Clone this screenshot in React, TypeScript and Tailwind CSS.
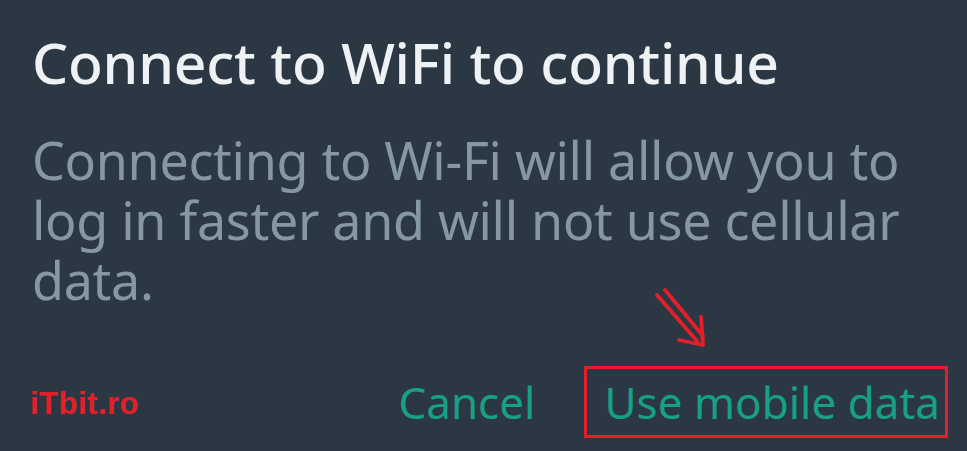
import { } from 'react'

function Arrow() {
  return (
    <svg
      className="absolute left-[652px] top-[288px]"
      width="62"
      height="64"
      viewBox="0 0 62 64"
      fill="none"
      stroke="#e3202a"
      strokeWidth="3.8"
      strokeLinecap="round"
      strokeLinejoin="round"
    >
      <path d="M5 7 L45 53" />
      <path d="M13 2 L51 48" />
      <path d="M27 52 L51 57 L49 29" />
    </svg>
  )
}

export default function App() {
  return (
    <div className="relative h-[451px] w-[967px] overflow-hidden bg-[#2b3844] font-['Noto_Sans',sans-serif]">
      <div className="flex flex-col pl-[32px] pt-[24px]">
        <h1 className="text-[57px] font-medium leading-[76px] tracking-[-0.2px] text-[#eef2f5]">
          Connect to WiFi to continue
        </h1>
        <p className="mt-[30px] w-[910px] text-[52px] leading-[60px] tracking-[-0.3px] text-[#8697a4]">
          Connecting to Wi-Fi will allow you to log in faster and will not use cellular data.
        </p>
      </div>

      <div className="mt-[56px] flex items-center justify-between pl-[30px] pr-[19px]">
        <span className="mt-[4px] font-['Liberation_Sans',sans-serif] text-[31px] font-bold tracking-[0.5px] text-[#e3202a]">
          iTbit.ro
        </span>
        <div className="flex items-center gap-[49px]">
          <button className="text-[44px] leading-[56px] text-[#17a085]">Cancel</button>
          <button className="border-[3px] border-[#e3202a] py-[5px] pl-[17px] pr-[5px] text-[44px] leading-[56px] text-[#17a085]">
            Use mobile data
          </button>
        </div>
      </div>

      <Arrow />
    </div>
  )
}
